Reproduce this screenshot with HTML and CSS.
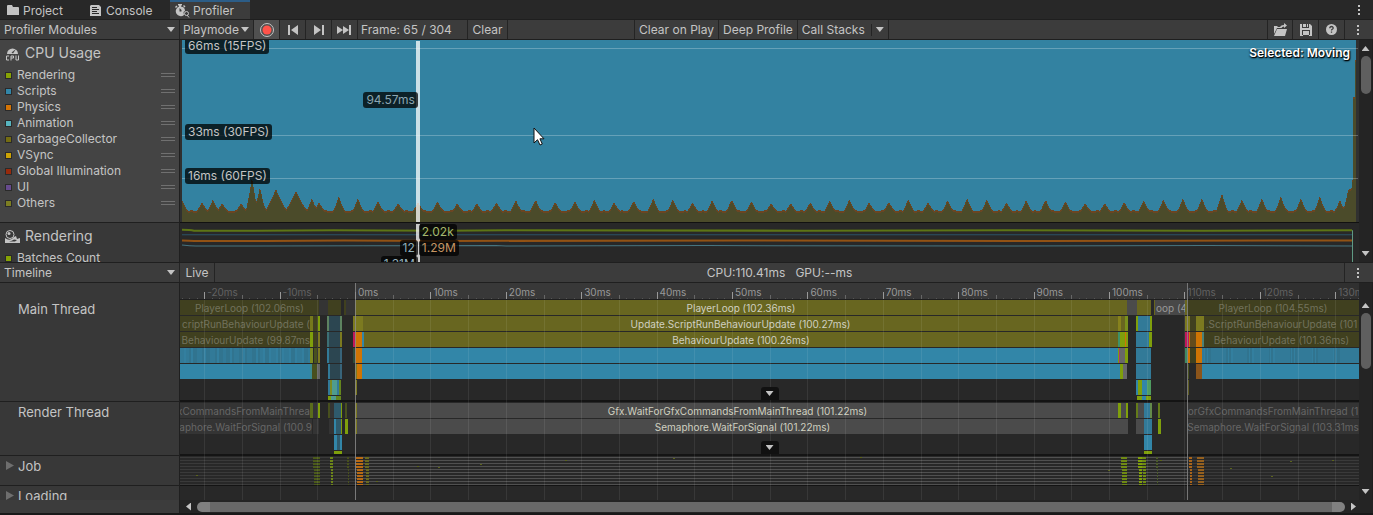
FILE: index.html
```html
<!DOCTYPE html>
<html lang="en">
    <head>
        <title>Profiler</title>
        <meta charset="UTF-8">
        <meta name="viewport" content="width=device-width, initial-scale=1.0">
        <link rel="stylesheet" href="styles.css">
    </head>
    <body>
        <nav class="tabs">
            <button class="tab tab-project">
                <svg width="12" height="11" viewBox="0 0 12 11"><path d="M0 1q0-1 1-1h4l1 2h5q1 0 1 1v7H0z"/></svg>
                Project
            </button>
            <button class="tab tab-console">
                <svg width="11" height="11" viewBox="0 0 11 11"><path fill-rule="evenodd" d="M1 0h8l2 2v9H0V1zM2 2v1h5V2zm0 2v1h7V4zm0 2v1h5V6zm0 2v1h7V8z"/></svg>
                Console
            </button>
            <button class="tab active">
                <svg width="15" height="14" viewBox="0 0 15 14"><path fill-rule="evenodd" d="M3 0h4v1.500H6v1a4.500 4.500 0 0 1 4 4.500L8.500 8 9 11a5 5 0 1 1-5-8.500v-1H3zM0 3l1.500-1.500 1 1L1 4zM8 2l1-1 1.500 1.500-1 1zM4.500 4v3.500h2V6z"/><circle cx="11.500" cy="9.500" r="2" fill="none" stroke="#c4c4c4"/><path d="m12 11 2 2.500" stroke="#c4c4c4"/></svg>
                Profiler
            </button>
            <button class="icon-btn tab-menu" aria-label="Window menu"><i class="kebab"></i></button>
        </nav>

        <header class="toolbar">
            <div class="side-cell dropdown">
                <select aria-label="Profiler Modules"><option>Profiler Modules</option></select>
            </div>
            <div class="dropdown playmode">
                <select aria-label="Target"><option>Playmode</option></select>
            </div>
            <button class="icon-btn record" aria-label="Record">
                <svg width="16" height="16" viewBox="0 0 16 16"><circle cx="8" cy="8" r="6.500" fill="none" stroke="#c4c4c4"/><circle cx="8" cy="8" r="4.500" fill="#ff534a"/></svg>
            </button>
            <button class="icon-btn" aria-label="Previous frame">
                <svg width="12" height="10" viewBox="0 0 12 10"><path d="M1 0h2v10H1zM11 0v10L4 5z"/></svg>
            </button>
            <button class="icon-btn" aria-label="Next frame">
                <svg width="12" height="10" viewBox="0 0 12 10"><path d="M9 0h2v10H9zM1 0v10l7-5z"/></svg>
            </button>
            <button class="icon-btn" aria-label="Current frame">
                <svg width="15" height="10" viewBox="0 0 15 10"><path d="M0 1v8l6-4zM6 1v8l6-4zM12 0h2v10h-2z"/></svg>
            </button>
            <span class="frame">Frame: 65 / 304</span>
            <button class="clear">Clear</button>
            <span class="spacer"></span>
            <button class="clear-play">Clear on Play</button>
            <button>Deep Profile</button>
            <div class="dropdown stacks">
                <select aria-label="Call Stacks"><option>Call Stacks</option></select>
            </div>
            <span class="spacer wide"></span>
            <button class="icon-btn open" aria-label="Load">
                <svg width="15" height="14" viewBox="0 0 15 14"><path d="M1 3h3l1 1h3v1H4L1 11zM4 6h10l-2 7H1z"/><path d="M7 5q0-3 4-3V0l3 2.500L11 5V3.500Q9 3.500 8.500 5z"/></svg>
            </button>
            <button class="icon-btn" aria-label="Save">
                <svg width="12" height="12" viewBox="0 0 12 12"><path fill-rule="evenodd" d="M0 0h2v4h7V0h1l2 2v10H0zM3 0h3v3H3zM7 0h1v3H7zM2 6v5h8V6zM3 7h6v5H3z"/></svg>
            </button>
            <button class="icon-btn" aria-label="Help">
                <svg width="11" height="11" viewBox="0 0 11 11"><circle cx="5.500" cy="5.500" r="5.500"/><path d="M3.800 4.200q0-1.700 1.700-1.700t1.700 1.500q0 .8-.9 1.300t-.8 1.200M5.500 7.500v1.300" fill="none" stroke="#3c3c3c" stroke-width="1.300"/></svg>
            </button>
            <button class="icon-btn" aria-label="Options"><i class="kebab"></i></button>
        </header>

        <section class="modules">
            <aside class="module-list">
                <div class="module selected">
                    <h2>
                        <svg width="15" height="15" viewBox="0 0 15 15"><path fill-rule="evenodd" d="M2 8a5.500 5.500 0 1 1 11 0zM6.500 6.500 8 7.500 11 3z"/><path d="M4 10H1.500v4H4M6 14.500V10h2.500v2H6M11 9.500V14h2.500V9.500" fill="none" stroke="#c4c4c4"/></svg>
                        CPU Usage
                    </h2>
                    <ul>
                        <li><i class="c-rendering"></i>Rendering<b></b></li>
                        <li><i class="c-scripts"></i>Scripts<b></b></li>
                        <li><i class="c-physics"></i>Physics<b></b></li>
                        <li><i class="c-animation"></i>Animation<b></b></li>
                        <li><i class="c-gc"></i>GarbageCollector<b></b></li>
                        <li><i class="c-vsync"></i>VSync<b></b></li>
                        <li><i class="c-gi"></i>Global Illumination<b></b></li>
                        <li><i class="c-ui"></i>UI<b></b></li>
                        <li><i class="c-others"></i>Others<b></b></li>
                    </ul>
                </div>
                <div class="module">
                    <h2>
                        <svg width="15" height="13" viewBox="0 0 15 13"><circle cx="5" cy="4.500" r="4" fill="none" stroke="#c4c4c4"/><circle cx="4" cy="3.500" r="1.500"/><path fill-rule="evenodd" d="M0 8q5 4 9-1l2-1 1 3 3-1v5H0zM4 11.500h6l2-1.500-3-.5q-2 1.500-5 2z"/></svg>
                        Rendering
                    </h2>
                    <ul>
                        <li><i class="c-rendering"></i>Batches Count</li>
                    </ul>
                </div>
            </aside>
            <div class="charts">
                <div class="chart cpu-chart">
                    <svg id="cpu" viewBox="0 0 1179 182" preserveAspectRatio="none"></svg>
                    <span class="tag fps66">66ms (15FPS)</span>
                    <span class="tag fps33">33ms (30FPS)</span>
                    <span class="tag fps16">16ms (60FPS)</span>
                    <span class="marker"><span class="tag before value">94.57ms</span></span>
                    <strong class="selection">Selected: Moving</strong>
                    <svg class="cursor" width="12" height="19" viewBox="0 0 12 19"><path d="M1 1v15l3.500-3.300L7 18l2.300-1-2.400-5.200H11z" fill="#fff" stroke="#111"/></svg>
                </div>
                <div class="chart render-chart">
                    <svg viewBox="0 0 1179 38" preserveAspectRatio="none">
                        <g fill="none">
                            <path d="M2 6.500q8 0 12 1l60 0 80-.5 110 .5 60-.5 300 .5 200-.5 200 .5 148-.5" stroke="#5d7515" stroke-width="2"/>
                            <path d="M2 11.500H1173" stroke="#2b5265"/>
                            <path d="M2 17q8 0 12 .5l70 0 80-.5 100 .5 300-.5 300 .5 309-.5" stroke="#925214" stroke-width="2"/>
                            <path d="M2 21.500q8 1 14 1l300-.5 10 .5 200-.5 300 .5 200-.5 147 .5" stroke="#46747f"/>
                            <path d="M1172.500 7V38" stroke="#5f9a83"/>
                        </g>
                    </svg>
                    <span class="marker">
                        <span class="tag batches">2.02k</span>
                        <span class="tag before calls">12</span>
                        <span class="tag tris">1.29M</span>
                        <span class="tag before verts">1.31M</span>
                    </span>
                </div>
            </div>
            <div class="vscroll top"><i class="up"></i><span></span><i class="down"></i></div>
        </section>

        <header class="toolbar details-bar">
            <div class="side-cell dropdown">
                <select aria-label="View"><option>Timeline</option></select>
            </div>
            <button class="live">Live</button>
            <p class="totals">CPU:110.41ms&nbsp;&nbsp; GPU:--ms</p>
            <button class="icon-btn" aria-label="Timeline options"><i class="kebab"></i></button>
        </header>

        <section class="timeline">
            <aside class="threads">
                <div class="thread main">Main Thread</div>
                <div class="thread render">Render Thread</div>
                <div class="thread job"><button aria-label="Expand Job"></button>Job</div>
                <div class="thread loading"><button aria-label="Expand Loading"></button>Loading</div>
            </aside>
            <div class="tracks" id="tracks">
                <div class="ruler" id="ruler"></div>
                <div class="track main" id="main"><button class="expand" aria-label="Expand Main Thread"></button></div>
                <div class="track render" id="render"><button class="expand" aria-label="Expand Render Thread"></button></div>
                <div class="track job"><svg id="job" viewBox="0 0 1179 29" preserveAspectRatio="none"></svg></div>
                <div class="track loading"></div>
                <svg class="grid" id="grid" viewBox="0 0 1179 217" preserveAspectRatio="none"></svg>
            </div>
            <div class="vscroll"><i class="up"></i><span></span><i class="down"></i></div>
            <div class="hscroll"><i class="left"></i><span></span><i class="right"></i></div>
        </section>
        <script src="script.js"></script>
    </body>
</html>
```
FILE: styles.css
```css
:root {
    --bar: #3c3c3c;
    --panel: #383838;
    --dark: #282828;
    --line: #1f1f1f;
    --text: #c4c4c4;
}

* {
    box-sizing: border-box;
    margin: 0;
    padding: 0;
}

body {
    display: flex;
    flex-direction: column;
    height: 100vh;
    background: #191919;
    color: var(--text);
    font: 12px/16px Inter, "Liberation Sans", sans-serif;
    overflow: hidden;
}

button,
select {
    border: 0;
    background: none;
    color: inherit;
    font: inherit;
    white-space: nowrap;
}

svg {
    display: block;
    fill: var(--text);
}

ul {
    list-style: none;
}

/* window tabs */
.tabs {
    display: flex;
    flex: none;
    height: 19px;
    background: var(--dark);
}

.tab {
    display: flex;
    align-items: center;
    padding: 2px 12px 0 7px;
    gap: 4px;
}

.tab-project {
    width: 83px;
}

.tab-console {
    width: 87px;
    gap: 5px;
}

.tab.active {
    width: 80px;
    padding: 0 5px;
    gap: 3px;
    background: var(--bar);
    border-top: 2px solid #2c5d87;
}

.icon-btn {
    display: grid;
    place-items: center;
    width: 26px;
    flex: none;
}

.tab-menu {
    width: 28px;
    margin-left: auto;
}

.kebab {
    width: 2px;
    height: 10px;
    background: repeating-linear-gradient(var(--text) 0 2px, transparent 2px 4px);
}

/* toolbars */
.toolbar {
    display: flex;
    flex: none;
    height: 21px;
    background: var(--bar);
    border-top: 1px solid var(--line);
    border-bottom: 1px solid var(--line);
}

.toolbar > button,
.frame {
    padding: 0 4px;
    border-right: 1px solid #242424;
}

.toolbar > .icon-btn {
    padding: 0;
}

.toolbar > .icon-btn:last-child {
    width: 28px;
    padding-right: 2px;
    border-right: 0;
}

.dropdown {
    display: grid;
    grid-template-columns: 1fr 16px;
    align-items: center;
    border-right: 1px solid #242424;
}

.dropdown select {
    grid-area: 1 / 1 / 2 / 3;
    appearance: none;
    width: 100%;
    height: 19px;
    padding-left: 4px;
}

.dropdown::after {
    content: '';
    grid-area: 1 / 2;
    width: 8px;
    height: 5px;
    margin-left: 4px;
    background: var(--text);
    clip-path: polygon(0 0, 100% 0, 50% 100%);
    pointer-events: none;
}

.side-cell {
    width: 180px;
}

.playmode {
    width: 74px;
}

.playmode select {
    padding-left: 3px;
}

.record {
    background: #505050;
}

.frame {
    width: 110px;
    padding: 2px 3px;
}

.toolbar .clear {
    width: 40px;
}

.toolbar .clear-play {
    border-left: 1px solid #242424;
}

.spacer {
    flex: 1;
}

.spacer.wide {
    flex: 3;
}

.stacks {
    width: 91px;
    background: linear-gradient(#242424, #242424) 73px 4px / 1px 12px no-repeat;
}

.toolbar .open {
    border-left: 1px solid #242424;
}

/* module list and charts */
.modules {
    display: flex;
    flex: none;
    height: 222px;
    background: var(--dark);
    overflow: hidden;
}

.module-list {
    width: 180px;
    flex: none;
    background: var(--panel);
    border-right: 1px solid var(--line);
}

.module {
    height: 183px;
    padding: 5px 4px 0 5px;
    border-bottom: 1px solid var(--line);
}

.module.selected {
    background: #444;
}

.module h2 {
    display: flex;
    align-items: center;
    gap: 5px;
    height: 16px;
    margin-bottom: 6px;
    font-size: 14px;
    font-weight: 400;
}

.module li {
    display: flex;
    align-items: center;
    height: 16px;
}

.module li i {
    width: 7px;
    height: 7px;
    margin-right: 5px;
    border: 1px solid #2a2a2a;
}

.module li b {
    width: 14px;
    height: 4px;
    margin-left: auto;
    border: solid #707070;
    border-width: 1px 0;
}

.c-rendering { background: #87a305; }
.c-scripts { background: #3286a8; }
.c-physics { background: #d47405; }
.c-animation { background: #57b4bf; }
.c-gc { background: #756d12; }
.c-vsync { background: #cca305; }
.c-gi { background: #972a0c; }
.c-ui { background: #674b8e; }
.c-others { background: #7c7e22; }

.charts {
    flex: 1;
}

.chart {
    position: relative;
    overflow: hidden;
}

.chart > svg:first-child {
    width: 100%;
    height: 100%;
}

.cpu-chart {
    height: 183px;
    background: #303030;
    border-bottom: 1px solid #111;
}

.render-chart {
    height: 39px;
}

.tag {
    position: absolute;
    height: 16px;
    padding: 0 3px;
    background: rgba(0, 0, 0, 0.75);
    border-radius: 3px;
    white-space: nowrap;
}

.fps66 { left: 5px; top: -2px; }
.fps33 { left: 5px; top: 84px; }
.fps16 { left: 5px; top: 128px; }

.marker {
    position: absolute;
    left: 20%;
    top: 1px;
    bottom: 0;
    width: 4px;
    background: rgba(255, 255, 255, 0.75);
}

.marker .tag {
    left: 3px;
    background: rgba(0, 0, 0, 0.75);
}

.marker .before {
    left: auto;
    right: 2px;
}

.marker .value { top: 51px; color: #8ba6b2; }
.marker .batches { top: 0; color: #a5b86c; }
.marker .calls { top: 16px; color: #91afba; }
.marker .tris { top: 16px; color: #c69562; }
.marker .verts { top: 32px; color: #91afba; }

.selection {
    position: absolute;
    right: 9px;
    top: 5px;
    color: #fff;
    font-weight: 600;
    text-shadow: 1px 1px 1px #000, 0 1px 2px #000;
}

.cursor {
    position: absolute;
    left: 29.9%;
    top: 87px;
}

/* scroll bars */
.vscroll {
    display: flex;
    flex-direction: column;
    align-items: center;
    width: 14px;
    padding: 6px 0;
    background: #242424;
    border-right: 1px solid var(--line);
}

.vscroll.top span {
    height: 38px;
}

.vscroll span {
    width: 10px;
    height: 56px;
    margin: 5px 0 auto;
    border-radius: 5px;
    background: #5f5f5f;
}

.timeline .vscroll {
    padding-top: 20px;
}

.up,
.down {
    width: 8px;
    height: 5px;
    background: var(--text);
    clip-path: polygon(50% 0, 100% 100%, 0 100%);
}

.down {
    clip-path: polygon(0 0, 100% 0, 50% 100%);
}

.left,
.right {
    width: 5px;
    height: 8px;
    background: var(--text);
    clip-path: polygon(0 50%, 100% 0, 100% 100%);
}

.right {
    clip-path: polygon(0 0, 100% 50%, 0 100%);
}

.hscroll {
    grid-column: 2 / 4;
    display: flex;
    align-items: center;
    gap: 6px;
    padding: 0 17px 0 6px;
    background: #242424;
}

.hscroll span {
    flex: 1;
    height: 10px;
    border: solid #808080;
    border-width: 0 13px;
    border-radius: 5px;
    background: #686868;
}

/* timeline */
.live {
    width: 35px;
}

.totals {
    flex: 1;
    padding-top: 2px;
    border-right: 1px solid #242424;
    text-align: center;
}

.timeline {
    display: grid;
    grid-template-columns: 180px 1fr 14px;
    grid-template-rows: 1fr 13px;
    flex: 1;
    min-height: 0;
    margin-bottom: 2px;
    background: var(--dark);
}

.threads {
    grid-row: 1 / 3;
    display: flex;
    flex-direction: column;
    background: var(--bar);
    border-right: 1px solid var(--line);
    overflow: hidden;
    font-size: 13px;
}

.thread {
    position: relative;
    padding: 2px 18px;
    border-bottom: 1px solid var(--line);
    background: var(--panel);
}

.threads .main {
    height: 119px;
    padding-top: 18px;
}

.track.main {
    height: 102px;
}

.render {
    height: 54px;
}

.job {
    height: 30px;
}

.threads .loading {
    flex: none;
    height: 14px;
    overflow: hidden;
    border: 0;
}

.thread button {
    position: absolute;
    left: 6px;
    top: 5px;
    width: 8px;
    height: 9px;
    background: #6e6e6e;
    clip-path: polygon(0 0, 100% 50%, 0 100%);
}

.tracks {
    position: relative;
    overflow: hidden;
}

.ruler {
    position: relative;
    height: 17px;
    background: #303030;
    border-bottom: 1px solid var(--line);
    font-size: 10px;
    overflow: hidden;
}

.ruler .current {
    position: absolute;
    top: 0;
    bottom: 0;
    background: var(--panel);
}

.ruler .mark {
    position: absolute;
    bottom: 0;
    width: 1px;
    height: 4px;
    background: #666;
}

.ruler .mark.major {
    height: 7px;
    background: #999;
}

.ruler .mark.tiny {
    height: 1px;
    background: #555;
}

.ruler .time {
    position: absolute;
    top: 1px;
    padding-left: 3px;
    color: #999;
}

.ruler .time.off {
    color: #626262;
}

.track {
    position: relative;
    border-bottom: 2px solid #141414;
    overflow: hidden;
}

.track.render {
    padding-top: 1px;
}

.track.job {
    border-bottom-width: 1px;
}

.track.loading {
    border: 0;
}

.row {
    position: relative;
    height: 16px;
}

.bar {
    position: absolute;
    top: 0;
    height: 15px;
    overflow: hidden;
    color: #d0d0c0;
    font-size: 10px;
    line-height: 17px;
    text-align: center;
    white-space: nowrap;
}

.bar.dim {
    color: #72725c;
}

.bar.grey {
    color: #666;
}

.bar.part {
    color: #999;
}

/* labels of bars cut off by the view */
.bar.cut {
    display: flex;
    justify-content: flex-end;
}

.expand {
    position: absolute;
    left: 50%;
    bottom: 0;
    width: 18px;
    height: 13px;
    margin-left: -9px;
    border-radius: 3px 3px 0 0;
    background: #111;
    z-index: 2;
}

.expand::after {
    content: '';
    display: block;
    width: 8px;
    height: 5px;
    margin: 0 auto;
    background: var(--text);
    clip-path: polygon(0 0, 100% 0, 50% 100%);
}

.job svg {
    width: 100%;
    height: 29px;
}

.grid {
    position: absolute;
    left: 0;
    top: 0;
    width: 100%;
    height: 217px;
    pointer-events: none;
}
```
FILE: script.js
```js
// horizontal units of every chart: the view is 1179 wide and starts at 180
var VIEW = 1179;
var START = 180;
var ZERO = 355;
var PER_MS = 7.54;

var OLIVE = '#686620';
var OLIVE_DIM = '#40401f';
var BLUE = '#3286a8';
var BLUE_MID = '#327a98';
var TEAL = '#2c4651';
var GREEN = '#7f9f0c';
var ORANGE = '#cf7404';
var GREY = '#4b4b4b';
var GREY_DIM = '#343434';

function pct(n) {
    return (n / VIEW * 100) + '%';
}

// CPU usage
function drawCpu() {
    var peaks = [[182, 199], [202, 202], [213, 199], [222, 203], [241, 203], [252, 177],
        [260, 187], [276, 189], [296, 191], [312, 198], [319, 202], [339, 196], [358, 198],
        [378, 201], [398, 203], [418, 202]];
    var heights = [201, 203, 203, 202, 200, 199, 202, 201, 199, 202, 200, 198, 199, 202, 200, 199];
    for (var i = 0; i < 38; i++) {
        peaks.push([437.5 + i * 19.62, heights[i % heights.length]]);
    }
    peaks = peaks.concat([[1183, 198], [1202, 198], [1222, 193], [1242, 199], [1262, 198],
        [1281, 196], [1301, 198], [1320, 196], [1340, 200]]);

    var top = [];
    for (var x = 182; x < 1345; x++) {
        var y = 211 - (Math.sin(x * 0.7) > 0.6 ? 1 : 0);
        peaks.forEach(function (p) {
            var d = Math.abs(x - p[0]);
            var h = 212 - p[1];
            var spread = h > 18 && p[0] > 265 && p[0] < 300 ? 13 : 7;
            if (d < spread) {
                y = Math.min(y, 212 - h * Math.pow(1 - d / spread, 1.4));
            }
        });
        top.push([x, Math.round(y)]);
    }
    top.push([1347, 196], [1348, 190], [1352, 188], [1353, 173], [1353, 97], [1355, 97], [1355, 60], [1356, 60], [1356, 40]);

    function area(shift) {
        return 'M2 182L' + top.map(function (p) {
            return (p[0] - START) + ' ' + (p[1] - 40 + shift);
        }).join('L') + 'V182z';
    }
    document.getElementById('cpu').innerHTML =
        '<path d="M2 0H1176V182H2z" fill="#3382a1"/>' +
        '<path d="' + area(0) + '" fill="#6b4522" shape-rendering="crispEdges"/>' +
        '<path d="' + area(2) + '" fill="#4b4b2a" shape-rendering="crispEdges"/>' +
        '<path d="M2 8.5H1178M2 95.5H1178M2 138.5H1178" stroke="#fff" stroke-opacity=".25"/>';
}

// [from, to, colour, label, label class]
var mainRows = [
    [
        [180, 319, OLIVE_DIM, 'PlayerLoop (102.06ms)', 'dim'], [319, 328, GREY_DIM], [328, 341, OLIVE_DIM],
        [344, 346, OLIVE_DIM], [346, 355, GREY_DIM], [355, 1127, OLIVE, 'PlayerLoop (102.36ms)'],
        [1127, 1137, GREY], [1137, 1151, OLIVE], [1154, 1155, OLIVE],
        [1155, 1187, '#484848', 'oop (4', 'cut part'], [1185, 1187, OLIVE], [1187, 1359, OLIVE_DIM, 'PlayerLoop (104.55ms)', 'dim']
    ],
    [
        [180, 310, OLIVE_DIM, 'criptRunBehaviourUpdate (', 'dim cut'], [310, 313, '#75781c'], [313, 318, OLIVE_DIM], [318, 320, GREEN],
        [327, 329, '#5d8260'], [329, 340, TEAL], [340, 342, '#5d8260'],
        [353, 363, '#7c7a20'], [363, 1118, OLIVE, 'Update.ScriptRunBehaviourUpdate (100.27ms)'],
        [1118, 1121, '#87821d'], [1121, 1125, OLIVE], [1125, 1128, '#78901c'],
        [1136, 1138, GREEN], [1138, 1150, BLUE_MID], [1150, 1152, GREEN],
        [1185, 1190, '#7c7a20'], [1190, 1196, OLIVE_DIM], [1196, 1204, '#7c7a20'],
        [1204, 1359, OLIVE_DIM, '.ScriptRunBehaviourUpdate (101', 'dim']
    ],
    [
        [180, 310, OLIVE_DIM, 'BehaviourUpdate (99.87ms', 'dim cut'], [310, 313, GREEN], [313, 317, OLIVE_DIM], [318, 320, '#7c7a20'],
        [327, 329, '#3c6f75'], [329, 340, TEAL], [340, 342, '#7c7a20'],
        [353, 355, '#c2185b'], [355, 362, ORANGE], [362, 364, BLUE], [364, 1118, OLIVE, 'BehaviourUpdate (100.26ms)'],
        [1118, 1120, '#3f9268'], [1120, 1125, GREEN], [1125, 1126, ORANGE], [1126, 1128, GREEN],
        [1136, 1149, BLUE_MID], [1149, 1152, GREEN],
        [1185, 1189, '#c2185b'], [1189, 1190, ORANGE], [1190, 1196, '#634b1c'], [1196, 1202, ORANGE], [1202, 1204, '#4a8178'],
        [1204, 1359, OLIVE_DIM, 'BehaviourUpdate (101.36ms)', 'dim']
    ],
    [
        [180, 310, BLUE_MID], [310, 313, '#7c8b22'], [314, 317, '#48501e'], [318, 320, '#7c7a20'],
        [327, 329, '#327a98'], [329, 340, TEAL], [340, 342, '#38647a'],
        [353, 355, '#2c4b3c'], [355, 362, ORANGE], [362, 1118, BLUE],
        [1118, 1119, GREEN], [1119, 1120, '#a33c73'], [1120, 1125, '#686868'], [1125, 1128, GREEN],
        [1136, 1151, BLUE_MID],
        [1185, 1188, '#3f8b63'], [1188, 1190, ORANGE], [1190, 1196, OLIVE_DIM], [1196, 1202, ORANGE], [1202, 1359, BLUE_MID]
    ],
    [
        [180, 310, BLUE], [310, 312, '#3c8a91'], [312, 317, '#48501e'], [317, 320, '#666'],
        [328, 330, '#327a98'], [330, 340, TEAL], [340, 342, '#38647a'],
        [355, 357, '#7c7a20'], [357, 362, ORANGE], [362, 1120, BLUE], [1120, 1123, GREEN], [1123, 1127, '#686868'],
        [1136, 1151, BLUE_MID], [1188, 1189, '#48501e'], [1196, 1202, '#8b541a'], [1202, 1359, BLUE]
    ],
    [
        [328, 330, '#327a98'], [330, 332, '#7c8b22'], [332, 337, '#4f9c8e'], [337, 339, '#327a98'], [339, 341, '#64851d'],
        [355, 357, '#7c7a20'], [1136, 1138, BLUE], [1138, 1142, GREEN], [1142, 1147, BLUE], [1147, 1151, '#4f9c60'], [1188, 1189, '#5d5b20']
    ],
    [
        [328, 331, GREEN], [331, 336, '#4f9c8e'], [336, 341, '#64851d'],
        [1137, 1142, GREEN], [1142, 1146, BLUE], [1146, 1151, GREEN]
    ]
];

// uneven shades where many short samples sit side by side
for (var s = 0; s < 40; s++) {
    var shade = s % 3 ? '#31748f' : '#337f9f';
    mainRows[3].push([184 + (s * 37) % 124, 186 + (s * 37) % 124, shade]);
    mainRows[3].push([1204 + (s * 43) % 150, 1206 + (s * 43) % 150, shade]);
}

var renderRows = [
    [
        [180, 310, GREY_DIM, 'xCommandsFromMainThrea', 'grey cut'], [310, 313, '#5a6c1b'], [313, 318, GREY_DIM], [318, 320, GREEN],
        [328, 330, '#48501e'], [330, 334, GREY_DIM], [334, 341, '#2f5a6c'], [341, 342, GREEN], [345, 347, '#48501e'],
        [355, 357, '#7c7a20'], [357, 1118, GREY, 'Gfx.WaitForGfxCommandsFromMainThread (101.22ms)'],
        [1118, 1121, GREEN], [1121, 1126, GREY], [1126, 1128, GREEN],
        [1136, 1138, '#647b1a'], [1138, 1144, GREY], [1144, 1150, BLUE_MID], [1150, 1152, '#648b4a'], [1158, 1160, '#647b1a'],
        [1187, 1359, GREY_DIM, 'orGfxCommandsFromMainThread (1', 'grey']
    ],
    [
        [180, 312, GREY_DIM, 'aphore.WaitForSignal (100.9', 'grey cut'], [313, 319, GREY_DIM],
        [329, 334, GREY_DIM], [334, 336, BLUE], [336, 341, '#2f5a6c'], [341, 342, GREEN], [345, 348, GREEN],
        [355, 357, '#7c7a20'], [357, 1128, GREY, 'Semaphore.WaitForSignal (101.22ms)'],
        [1136, 1144, GREY], [1144, 1152, BLUE_MID], [1158, 1161, GREEN],
        [1187, 1359, GREY_DIM, 'Semaphore.WaitForSignal (103.31ms', 'grey']
    ],
    [[334, 337, BLUE], [337, 340, '#2f5a6c'], [340, 342, BLUE], [1144, 1152, BLUE]],
    [[334, 342, GREEN], [1144, 1152, GREEN]]
];

function drawRows(id, rows) {
    var html = rows.map(function (row) {
        return '<div class="row">' + row.map(function (b) {
            return '<span class="bar ' + (b[4] || '') + '" style="left:' + pct(b[0] - START) +
                ';width:' + pct(b[1] - b[0]) + ';background:' + b[2] + '">' + (b[3] || '') + '</span>';
        }).join('') + '</div>';
    }).join('');
    document.getElementById(id).insertAdjacentHTML('afterbegin', html);
}

function drawRuler() {
    var html = '<span class="current" style="left:' + pct(ZERO - START) + ';width:' + pct(832) + '"></span>';
    var lines = '';
    for (var ms = -23; ms <= 133; ms++) {
        var x = ZERO - START + ms * PER_MS;
        var kind = ms % 10 === 0 ? ' major' : ms % 5 === 0 ? '' : ' tiny';
        html += '<i class="mark' + kind + '" style="left:' + pct(x) + '"></i>';
        if (ms % 10 === 0) {
            html += '<span class="time' + (ms < 0 || ms > 105 ? ' off' : '') + '" style="left:' + pct(x) + '">' + ms + 'ms</span>';
        }
        if (ms % 5 === 0) {
            lines += 'M' + (Math.round(x) + 0.5) + ' 17V217';
        }
    }
    document.getElementById('ruler').innerHTML = html;
    document.getElementById('grid').innerHTML =
        '<path d="' + lines + '" stroke="#fff" stroke-opacity=".08"/>' +
        '<path d="M175.500 0V217M1007.500 0V217" stroke="#8a8a8a" stroke-opacity=".8"/>';
}

// worker threads, one thin line each
function drawJobs() {
    var html = '';
    for (var y = 1; y < 29; y += 3) {
        html += '<path d="M0 ' + y + 'H1179v1H0z" fill="#3a3a3a"/><path d="M175 ' + y + 'H1007v1H175z" fill="#505050"/>';
        [[312, 319, '#4b5a1b'], [329, 332, '#6c8519'], [346, 348, '#48501e'], [355, 362, '#b86a14'], [364, 368, '#6a6a20'],
            [1120, 1126, '#6f8a14'], [1137, 1141, GREEN], [1141, 1145, '#6f8a14'], [1155, 1157, '#4b5a2b'],
            [1188, 1191, '#a8641a'], [1196, 1203, '#94601f']].forEach(function (c, i) {
            var shift = (y * 7 + i * 3 + (y > 12 ? 1 : 0)) % 3;
            var width = c[1] - c[0] - shift + 1;
            html += '<path d="M' + (c[0] - START + shift) + ' ' + y + 'h' + width + 'v2h-' + width + 'z" fill="' + c[2] + '"/>';
        });
    }
    [[376, 25], [417, 10], [438, 11], [480, 8], [196, 19], [673, 2], [860, 1], [1108, 14], [1160, 4], [1230, 12], [1290, 5], [1332, 4], [1271, 20], [565, 4]].forEach(function (d) {
        html += '<path d="M' + (d[0] - START) + ' ' + d[1] + 'h2v1h-2z" fill="#5c651c"/>';
    });
    var job = document.getElementById('job');
    job.setAttribute('shape-rendering', 'crispEdges');
    job.innerHTML = html;
}

drawCpu();
drawRows('main', mainRows);
drawRows('render', renderRows);
drawRuler();
drawJobs();
```
